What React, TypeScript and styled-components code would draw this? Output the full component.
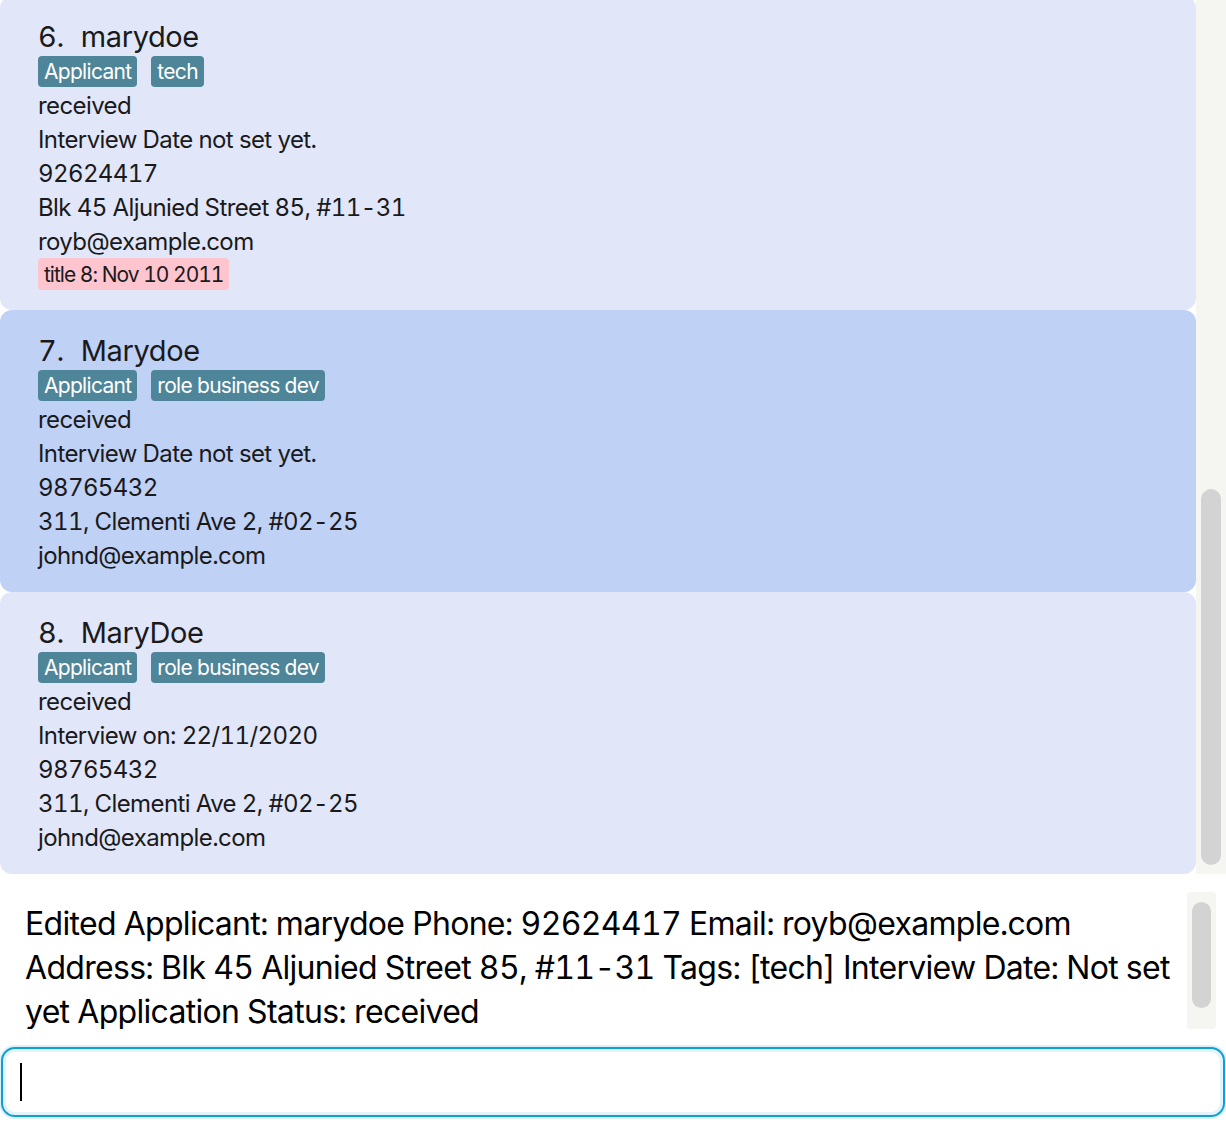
import React from "react";
import styled, { createGlobalStyle } from "styled-components";

const Global = createGlobalStyle`
  html, body { margin: 0; padding: 0; background: #ffffff; }
  body {
    font-family: Inter, "Noto Sans", "Liberation Sans", sans-serif;
    font-feature-settings: "tnum" 1, "calt" 0;
    overflow: hidden;
  }
  * { box-sizing: border-box; }
`;

const Page = styled.div`
  width: 1226px;
  height: 1124px;
  display: flex;
  flex-direction: column;
  background: #ffffff;
`;

const ListPanel = styled.div`
  height: 874px;
  display: flex;
  flex-shrink: 0;
`;

const CardColumn = styled.div`
  width: 1196px;
  height: 100%;
  overflow: hidden;
  display: flex;
  flex-direction: column;
  justify-content: flex-end;
`;

const Track = styled.div<{ $w: number }>`
  width: ${(p) => p.$w}px;
  background: #f5f5f2;
  display: flex;
  flex-direction: column;
  align-items: center;
`;

const ListTrack = styled(Track)`
  justify-content: flex-end;
  padding-bottom: 9px;
`;

const Thumb = styled.div<{ $h: number; $w: number }>`
  width: ${(p) => p.$w}px;
  height: ${(p) => p.$h}px;
  border-radius: 10px;
  background: #d3d3d3;
  flex-shrink: 0;
`;

const Card = styled.div<{ $selected?: boolean }>`
  flex-shrink: 0;
  background: ${(p) => (p.$selected ? "#bfd1f5" : "#e1e7f8")};
  border-radius: 12px;
  padding: 20px 38px 20px 38px;
  color: #1a1a1c;
`;

const NameLine = styled.div`
  height: 40px;
  display: flex;
  align-items: center;
  font-size: 29px;
  letter-spacing: -0.4px;
  white-space: nowrap;
`;

const Index = styled.span`
  margin-right: 17px;
`;

const TagRow = styled.div`
  display: flex;
  gap: 14px;
  height: 32px;
`;

const Tag = styled.span`
  display: inline-flex;
  align-items: center;
  height: 31px;
  padding: 0 6px;
  border-radius: 4px;
  background: #4f8598;
  color: #ffffff;
  font-size: 21px;
  letter-spacing: -0.7px;
`;

const Field = styled.div`
  height: 34px;
  display: flex;
  align-items: center;
  font-size: 24px;
  letter-spacing: -0.6px;
  white-space: nowrap;
`;

const DateTag = styled.span`
  display: inline-flex;
  align-items: center;
  height: 32px;
  padding: 0 6px;
  border-radius: 4px;
  background: #ffc5cf;
  color: #1a1a1c;
  font-size: 21px;
  letter-spacing: -1px;
`;

const Spacer = styled.div<{ $h: number }>`
  height: ${(p) => p.$h}px;
  flex-shrink: 0;
`;

const ResultPanel = styled.div`
  height: 137px;
  display: flex;
  flex-shrink: 0;
  padding-right: 10px;
`;

const ResultText = styled.div`
  flex: 1;
  padding: 10px 0 0 25px;
  font-size: 32px;
  line-height: 44px;
  color: #000000;
  letter-spacing: -0.7px;
  overflow: hidden;
`;

const ResultTrack = styled(Track)`
  border-radius: 4px;
  padding-top: 10px;
`;

const CommandBox = styled.div`
  margin: 18px 1px 0 1px;
  height: 70px;
  border: 2px solid #109fd3;
  border-radius: 14px;
  box-shadow: 0 0 0 2px #dcf0fa, inset 0 0 0 3px #e2f3fb;
  background: #ffffff;
  display: flex;
  align-items: center;
  padding-left: 17px;
`;

const Caret = styled.div`
  width: 2px;
  height: 38px;
  background: #000000;
`;

type Person = {
  idx: number;
  name: string;
  tags: string[];
  interview: string;
  phone: string;
  address: string;
  email: string;
  dates?: string[];
  selected?: boolean;
};

const people: Person[] = [
  {
    idx: 6,
    name: "marydoe",
    tags: ["Applicant", "tech"],
    interview: "Interview Date not set yet.",
    phone: "92624417",
    address: "Blk 45 Aljunied Street 85, #11-31",
    email: "royb@example.com",
    dates: ["title 8: Nov 10 2011"],
  },
  {
    idx: 7,
    name: "Marydoe",
    tags: ["Applicant", "role business dev"],
    interview: "Interview Date not set yet.",
    phone: "98765432",
    address: "311, Clementi Ave 2, #02-25",
    email: "johnd@example.com",
    selected: true,
  },
  {
    idx: 8,
    name: "MaryDoe",
    tags: ["Applicant", "role business dev"],
    interview: "Interview on: 22/11/2020",
    phone: "98765432",
    address: "311, Clementi Ave 2, #02-25",
    email: "johnd@example.com",
  },
];

export default function App() {
  return (
    <Page>
      <Global />
      <ListPanel>
        <CardColumn>
          {people.map((p) => (
            <Card key={p.idx} $selected={p.selected}>
              <NameLine>
                <Index>{p.idx}.</Index>
                {p.name}
              </NameLine>
              <TagRow>
                {p.tags.map((t) => (
                  <Tag key={t}>{t}</Tag>
                ))}
              </TagRow>
              <Field>received</Field>
              <Field>{p.interview}</Field>
              <Field>{p.phone}</Field>
              <Field>{p.address}</Field>
              <Field>{p.email}</Field>
              {p.dates?.map((d) => (
                <DateTag key={d}>{d}</DateTag>
              ))}
            </Card>
          ))}
        </CardColumn>
        <ListTrack $w={30}>
          <Thumb $w={20} $h={376} />
        </ListTrack>
      </ListPanel>
      <Spacer $h={18} />
      <ResultPanel>
        <ResultText>
          Edited Applicant: marydoe Phone: 92624417 Email: royb@example.com
          Address: Blk 45 Aljunied Street 85, #11-31 Tags: [tech] Interview Date: Not set
          yet Application Status: received
        </ResultText>
        <ResultTrack $w={29}>
          <Thumb $w={19} $h={106} />
        </ResultTrack>
      </ResultPanel>
      <CommandBox>
        <Caret />
      </CommandBox>
    </Page>
  );
}
